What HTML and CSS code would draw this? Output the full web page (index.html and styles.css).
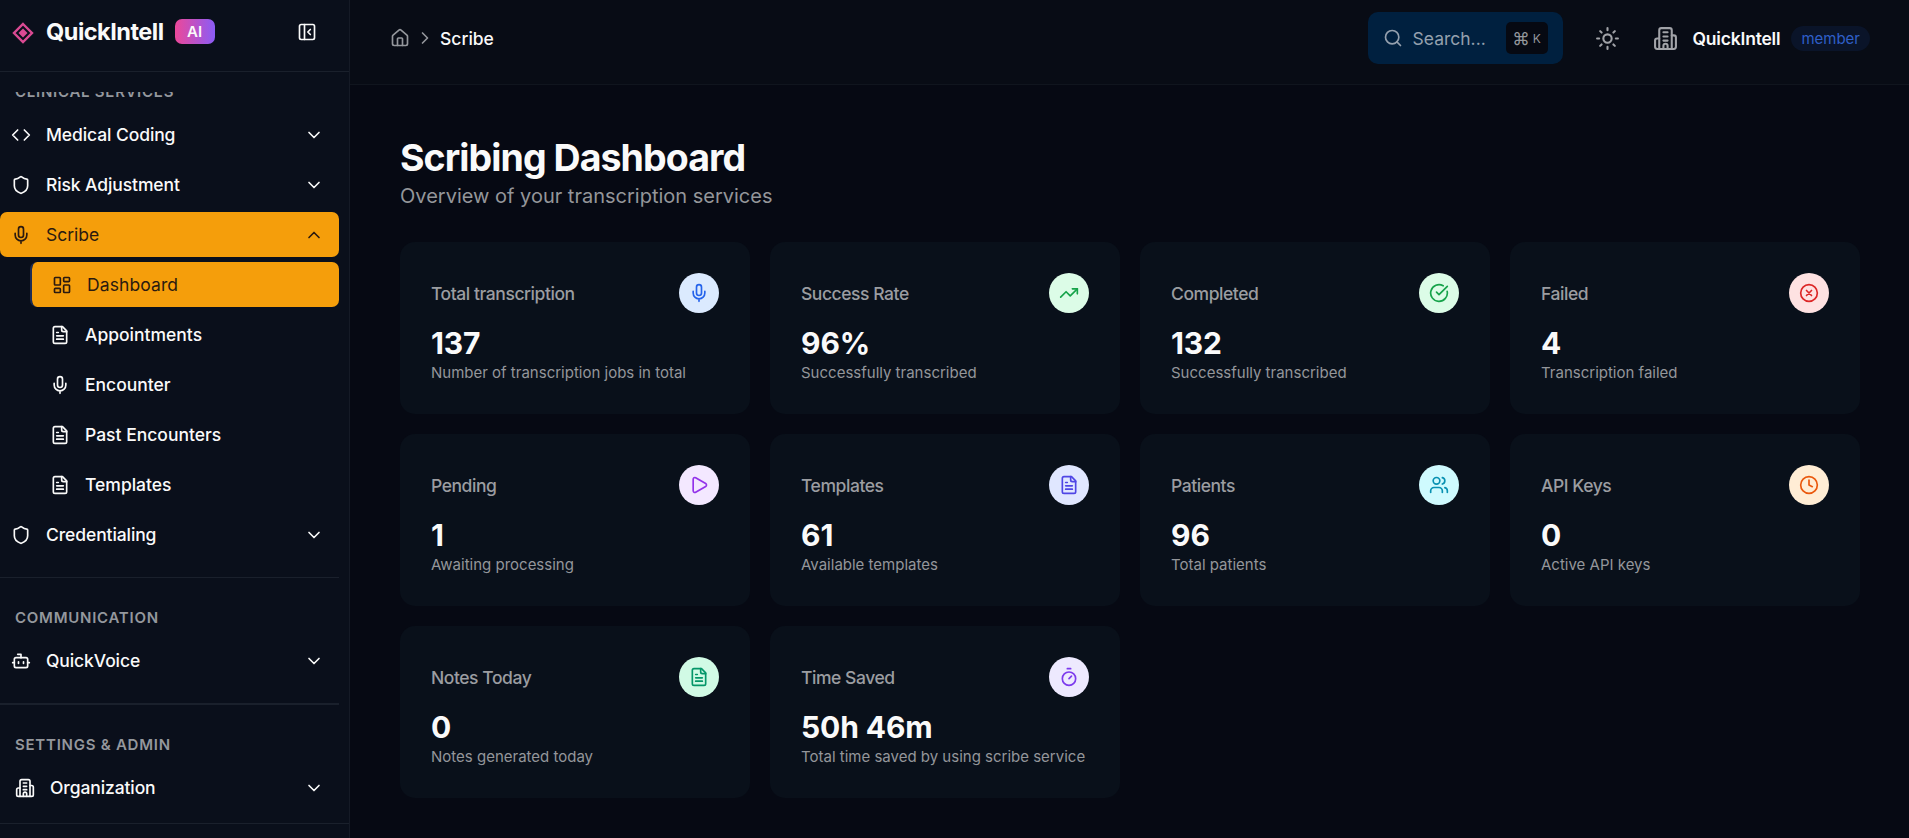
FILE: index.html
```html
<!DOCTYPE html>
<html lang="en">
<head>
    <meta charset="UTF-8">
    <meta name="viewport" content="width=device-width, initial-scale=1.0">
    <title>Scribing Dashboard | QuickIntell</title>
    <link rel="stylesheet" href="styles.css">
</head>
<body>

    <!-- Shared icons -->
    <svg class="sprite" xmlns="http://www.w3.org/2000/svg">
        <symbol id="i-code" viewBox="0 0 24 24"><path d="m16 18 6-6-6-6M8 6l-6 6 6 6"/></symbol>
        <symbol id="i-shield" viewBox="0 0 24 24"><path d="M20 13c0 5-3.5 7.5-7.66 8.95a1 1 0 0 1-.67-.01C7.5 20.5 4 18 4 13V6a1 1 0 0 1 1-1c2 0 4.5-1.2 6.24-2.72a1.17 1.17 0 0 1 1.52 0C14.51 3.81 17 5 19 5a1 1 0 0 1 1 1z"/></symbol>
        <symbol id="i-mic" viewBox="0 0 24 24"><path d="M12 2a3 3 0 0 0-3 3v7a3 3 0 0 0 6 0V5a3 3 0 0 0-3-3Z"/><path d="M19 10v2a7 7 0 0 1-14 0v-2M12 19v3"/></symbol>
        <symbol id="i-dashboard" viewBox="0 0 24 24"><rect width="7" height="9" x="3" y="3" rx="1"/><rect width="7" height="5" x="14" y="3" rx="1"/><rect width="7" height="9" x="14" y="12" rx="1"/><rect width="7" height="5" x="3" y="16" rx="1"/></symbol>
        <symbol id="i-file" viewBox="0 0 24 24"><path d="M15 2H6a2 2 0 0 0-2 2v16a2 2 0 0 0 2 2h12a2 2 0 0 0 2-2V7Z"/><path d="M14 2v4a2 2 0 0 0 2 2h4M10 9H8M16 13H8M16 17H8"/></symbol>
        <symbol id="i-bot" viewBox="0 0 24 24"><path d="M12 8V4H8"/><rect width="16" height="12" x="4" y="8" rx="2"/><path d="M2 14h2M20 14h2M15 13v2M9 13v2"/></symbol>
        <symbol id="i-building" viewBox="0 0 24 24"><path d="M6 22V4a2 2 0 0 1 2-2h8a2 2 0 0 1 2 2v18Z"/><path d="M6 12H4a2 2 0 0 0-2 2v6a2 2 0 0 0 2 2h2M18 9h2a2 2 0 0 1 2 2v9a2 2 0 0 1-2 2h-2M10 6h4M10 10h4M10 14h4"/><path d="M10 22v-3a2 2 0 0 1 4 0v3"/></symbol>
        <symbol id="i-down" viewBox="0 0 24 24"><path d="m6 9 6 6 6-6"/></symbol>
        <symbol id="i-up" viewBox="0 0 24 24"><path d="m18 15-6-6-6 6"/></symbol>
        <symbol id="i-right" viewBox="0 0 24 24"><path d="m9 18 6-6-6-6"/></symbol>
        <symbol id="i-panel" viewBox="0 0 24 24"><rect width="18" height="18" x="3" y="3" rx="2"/><path d="M9 3v18M16 15l-3-3 3-3"/></symbol>
        <symbol id="i-home" viewBox="0 0 24 24"><path d="M15 21v-8a1 1 0 0 0-1-1h-4a1 1 0 0 0-1 1v8"/><path d="M3 10a2 2 0 0 1 .709-1.528l7-5.999a2 2 0 0 1 2.582 0l7 5.999A2 2 0 0 1 21 10v9a2 2 0 0 1-2 2H5a2 2 0 0 1-2-2z"/></symbol>
        <symbol id="i-search" viewBox="0 0 24 24"><circle cx="11" cy="11" r="8"/><path d="m21 21-4.3-4.3"/></symbol>
        <symbol id="i-sun" viewBox="0 0 24 24"><circle cx="12" cy="12" r="4"/><path d="M12 2v2M12 20v2M4.93 4.93l1.41 1.41M17.66 17.66l1.41 1.41M2 12h2M20 12h2M6.34 17.66l-1.41 1.41M19.07 4.93l-1.41 1.41"/></symbol>
        <symbol id="i-trend" viewBox="0 0 24 24"><path d="m22 7-8.5 8.5-5-5L2 17"/><path d="M16 7h6v6"/></symbol>
        <symbol id="i-check" viewBox="0 0 24 24"><path d="M21.801 10A10 10 0 1 1 17 3.335"/><path d="m9 11 3 3L22 4"/></symbol>
        <symbol id="i-x" viewBox="0 0 24 24"><circle cx="12" cy="12" r="10"/><path d="m15 9-6 6M9 9l6 6"/></symbol>
        <symbol id="i-play" viewBox="0 0 24 24"><path d="M5 5a2 2 0 0 1 3.008-1.728l11.997 6.998a2 2 0 0 1 .003 3.458l-12 7A2 2 0 0 1 5 19z"/></symbol>
        <symbol id="i-users" viewBox="0 0 24 24"><path d="M16 21v-2a4 4 0 0 0-4-4H6a4 4 0 0 0-4 4v2"/><circle cx="9" cy="7" r="4"/><path d="M22 21v-2a4 4 0 0 0-3-3.87M16 3.13a4 4 0 0 1 0 7.75"/></symbol>
        <symbol id="i-clock" viewBox="0 0 24 24"><circle cx="12" cy="12" r="10"/><path d="M12 6v6l4 2"/></symbol>
        <symbol id="i-timer" viewBox="0 0 24 24"><path d="M10 2h4M12 14l3-3"/><circle cx="12" cy="14" r="8"/></symbol>
    </svg>

    <!-- Sidebar -->
    <aside class="sidebar">
        <div class="brand">
            <svg class="logo" viewBox="0 0 22 22"><path class="logo-ring" d="M11 2 20 11 11 20 2 11Z"/><path class="logo-core" d="M11 6.5 15.5 11 11 15.5 6.5 11Z"/></svg>
            <span class="brand-name">QuickIntell</span>
            <span class="ai-badge">AI</span>
            <svg class="icon collapse"><use href="#i-panel"/></svg>
        </div>

        <nav class="menu">
            <h3 class="menu-title first">Clinical Services</h3>
            <a class="item"><svg class="icon"><use href="#i-code"/></svg>Medical Coding<svg class="icon arrow"><use href="#i-down"/></svg></a>
            <a class="item"><svg class="icon"><use href="#i-shield"/></svg>Risk Adjustment<svg class="icon arrow"><use href="#i-down"/></svg></a>
            <a class="item active"><svg class="icon"><use href="#i-mic"/></svg>Scribe<svg class="icon arrow"><use href="#i-up"/></svg></a>
            <div class="submenu">
                <a class="item active"><svg class="icon"><use href="#i-dashboard"/></svg>Dashboard</a>
                <a class="item"><svg class="icon"><use href="#i-file"/></svg>Appointments</a>
                <a class="item"><svg class="icon"><use href="#i-mic"/></svg>Encounter</a>
                <a class="item"><svg class="icon"><use href="#i-file"/></svg>Past Encounters</a>
                <a class="item"><svg class="icon"><use href="#i-file"/></svg>Templates</a>
            </div>
            <a class="item"><svg class="icon"><use href="#i-shield"/></svg>Credentialing<svg class="icon arrow"><use href="#i-down"/></svg></a>

            <hr class="divider">
            <h3 class="menu-title">Communication</h3>
            <a class="item"><svg class="icon"><use href="#i-bot"/></svg>QuickVoice<svg class="icon arrow"><use href="#i-down"/></svg></a>

            <hr class="divider thick">
            <h3 class="menu-title">Settings &amp; Admin</h3>
            <a class="item org"><svg class="icon"><use href="#i-building"/></svg>Organization<svg class="icon arrow"><use href="#i-down"/></svg></a>
        </nav>
        <div class="sidebar-footer"></div>
    </aside>

    <!-- Page -->
    <div class="page">
        <header class="topbar">
            <div class="breadcrumb">
                <svg class="icon"><use href="#i-home"/></svg>
                <svg class="icon"><use href="#i-right"/></svg>
                <span>Scribe</span>
            </div>
            <div class="search">
                <svg class="icon"><use href="#i-search"/></svg>
                <span class="search-text">Search...</span>
                <kbd><span class="cmd">⌘</span>K</kbd>
            </div>
            <svg class="icon large theme"><use href="#i-sun"/></svg>
            <svg class="icon large"><use href="#i-building"/></svg>
            <span class="org-name">QuickIntell</span>
            <span class="role">member</span>
        </header>

        <main class="content">
            <h1>Scribing Dashboard</h1>
            <p class="subtitle">Overview of your transcription services</p>

            <div class="cards">
                <div class="card">
                    <div class="card-head"><h2>Total transcription</h2><span class="bubble blue"><svg class="icon"><use href="#i-mic"/></svg></span></div>
                    <div class="value">137</div>
                    <p>Number of transcription jobs in total</p>
                </div>
                <div class="card">
                    <div class="card-head"><h2>Success Rate</h2><span class="bubble green"><svg class="icon"><use href="#i-trend"/></svg></span></div>
                    <div class="value">96%</div>
                    <p>Successfully transcribed</p>
                </div>
                <div class="card">
                    <div class="card-head"><h2>Completed</h2><span class="bubble green"><svg class="icon"><use href="#i-check"/></svg></span></div>
                    <div class="value">132</div>
                    <p>Successfully transcribed</p>
                </div>
                <div class="card">
                    <div class="card-head"><h2>Failed</h2><span class="bubble red"><svg class="icon"><use href="#i-x"/></svg></span></div>
                    <div class="value">4</div>
                    <p>Transcription failed</p>
                </div>
                <div class="card">
                    <div class="card-head"><h2>Pending</h2><span class="bubble purple"><svg class="icon"><use href="#i-play"/></svg></span></div>
                    <div class="value">1</div>
                    <p>Awaiting processing</p>
                </div>
                <div class="card">
                    <div class="card-head"><h2>Templates</h2><span class="bubble indigo"><svg class="icon"><use href="#i-file"/></svg></span></div>
                    <div class="value">61</div>
                    <p>Available templates</p>
                </div>
                <div class="card">
                    <div class="card-head"><h2>Patients</h2><span class="bubble cyan"><svg class="icon"><use href="#i-users"/></svg></span></div>
                    <div class="value">96</div>
                    <p>Total patients</p>
                </div>
                <div class="card">
                    <div class="card-head"><h2>API Keys</h2><span class="bubble orange"><svg class="icon"><use href="#i-clock"/></svg></span></div>
                    <div class="value">0</div>
                    <p>Active API keys</p>
                </div>
                <div class="card">
                    <div class="card-head"><h2>Notes Today</h2><span class="bubble emerald"><svg class="icon"><use href="#i-file"/></svg></span></div>
                    <div class="value">0</div>
                    <p>Notes generated today</p>
                </div>
                <div class="card">
                    <div class="card-head"><h2>Time Saved</h2><span class="bubble violet"><svg class="icon"><use href="#i-timer"/></svg></span></div>
                    <div class="value">50h 46m</div>
                    <p>Total time saved by using scribe service</p>
                </div>
            </div>
        </main>
    </div>

</body>
</html>
```
FILE: styles.css
```css
* {
    margin: 0;
    padding: 0;
    box-sizing: border-box;
}
body {
    display: flex;
    height: 100vh;
    overflow: hidden;
    background: #060913;
    color: #fafafa;
    font-family: Inter, sans-serif;
    font-size: 17.5px;
    line-height: 25px;
}
.sprite {
    display: none;
}
.icon {
    width: 20px;
    height: 20px;
    flex-shrink: 0;
    fill: none;
    stroke: currentColor;
    stroke-width: 2;
    stroke-linecap: round;
    stroke-linejoin: round;
}
.icon.large {
    width: 25px;
    height: 25px;
}

/* Sidebar */
.sidebar {
    width: 350px;
    flex-shrink: 0;
    display: flex;
    flex-direction: column;
    background: #0a0f1b;
    border-right: 1px solid #151a26;
}
.brand {
    height: 72px;
    flex-shrink: 0;
    display: flex;
    align-items: center;
    padding: 0 32px 8px 12px;
    border-bottom: 1px solid #1a202c;
}
.logo {
    width: 22px;
    height: 22px;
    margin-top: 2px;
    margin-right: 12px;
}
.logo-ring {
    fill: none;
    stroke: #db4a93;
    stroke-width: 2.4;
}
.logo-core {
    fill: #db4a93;
}
.brand-name {
    font-size: 23.5px;
    font-weight: 700;
    letter-spacing: -0.5px;
}
.ai-badge {
    width: 40px;
    height: 25px;
    margin-left: 11px;
    border-radius: 7px;
    background: linear-gradient(90deg, #ec4899, #8b5cf6);
    font-size: 15px;
    font-weight: 600;
    text-align: center;
}
.collapse {
    margin-left: auto;
}
.menu {
    flex: 1;
    margin-top: 20px;
    padding-right: 10px;
    overflow: hidden;
}
.menu-title {
    height: 20px;
    padding-left: 15px;
    margin-bottom: 10px;
    color: #94979d;
    font-size: 15px;
    font-weight: 600;
    line-height: 20px;
    letter-spacing: 0.75px;
    text-transform: uppercase;
}
.menu-title.first {
    margin-top: -10px;
}
.item {
    height: 45px;
    margin-bottom: 5px;
    padding: 0 15px 0 11px;
    display: flex;
    align-items: center;
    gap: 15px;
    border-radius: 7px;
    font-weight: 500;
    letter-spacing: -0.1px;
}
.item .arrow {
    margin-left: auto;
}
.item.active {
    background: #f59e0b;
    color: #2b1a10;
    font-weight: 400;
    letter-spacing: 0;
}
.item.org {
    padding-left: 15px;
}
.submenu {
    padding-left: 30px;
}
.submenu .item {
    padding-left: 20px;
    letter-spacing: 0;
}
.submenu .item.active {
    border-left: 2px solid #1d2c55;
    background-clip: padding-box;
    letter-spacing: 0.1px;
}
.divider {
    height: 1px;
    margin: 20px 0 30px;
    border: none;
    background: #1a202c;
}
.divider.thick {
    height: 2px;
}
.sidebar-footer {
    height: 15px;
    border-top: 1px solid #1a202c;
}

/* Top bar */
.page {
    flex: 1;
    min-width: 0;
}
.topbar {
    height: 85px;
    padding: 0 39px 8px 40px;
    display: flex;
    align-items: center;
    background: #080c15;
    border-bottom: 1px solid #10151e;
}
.topbar > .icon {
    color: #a1a3a8;
}
.breadcrumb {
    display: flex;
    align-items: center;
    gap: 5px;
    margin-right: auto;
    font-weight: 500;
}
.breadcrumb .icon {
    color: #94979c;
}
.search {
    width: 195px;
    height: 52px;
    padding: 0 15px;
    display: flex;
    align-items: center;
    background: #00203f;
    border-radius: 10px;
    color: #94a0ae;
}
.search-text {
    margin-left: 10px;
    font-size: 17.5px;
}
kbd {
    width: 42px;
    height: 32px;
    margin-left: auto;
    display: flex;
    align-items: center;
    justify-content: center;
    gap: 3px;
    background: #060912;
    border-radius: 5px;
    color: #94979c;
    font-family: Inter, sans-serif;
    font-size: 12px;
}
.cmd {
    font-size: 17.5px;
}
.theme {
    margin: 0 33px 0 32px;
}
.org-name {
    margin-left: 15px;
    font-weight: 600;
    letter-spacing: -0.2px;
}
.role {
    margin-left: 11px;
    padding: 0 10px;
    border-radius: 13px;
    background: #0a1429;
    color: #2f5fc8;
    font-size: 15px;
}

/* Dashboard */
.content {
    padding: 50px 49px 0 50px;
}
h1 {
    font-size: 37.5px;
    font-weight: 700;
    line-height: 45px;
    letter-spacing: -0.94px;
}
.subtitle {
    margin-top: 1px;
    color: #94969a;
    font-size: 20px;
    line-height: 30px;
}
.cards {
    display: grid;
    grid-template-columns: repeat(4, 1fr);
    gap: 20px;
    margin-top: 31px;
}
.card {
    height: 172px;
    padding: 31px;
    background: #09101a;
    border-radius: 15px;
}
.card-head {
    display: flex;
    align-items: center;
    justify-content: space-between;
    margin-bottom: 10px;
}
.card h2 {
    color: #9b9da1;
    font-size: 17.5px;
    font-weight: 500;
    letter-spacing: -0.44px;
}
.value {
    font-size: 30px;
    font-weight: 700;
    line-height: 40px;
    letter-spacing: -0.1px;
}
.card p {
    color: #94969a;
    font-size: 15px;
    line-height: 20px;
}
.bubble {
    width: 40px;
    height: 40px;
    display: flex;
    align-items: center;
    justify-content: center;
    border-radius: 50%;
}
.blue {
    background: #dbeafe;
    color: #2563eb;
}
.green {
    background: #dcfce7;
    color: #16a34a;
}
.red {
    background: #fee2e2;
    color: #dc2626;
}
.purple {
    background: #f3e8ff;
    color: #9333ea;
}
.indigo {
    background: #e0e7ff;
    color: #4f46e5;
}
.cyan {
    background: #cffafe;
    color: #0891b2;
}
.orange {
    background: #ffedd5;
    color: #ea580c;
}
.emerald {
    background: #d1fae5;
    color: #059669;
}
.violet {
    background: #ede9fe;
    color: #7c3aed;
}
```
